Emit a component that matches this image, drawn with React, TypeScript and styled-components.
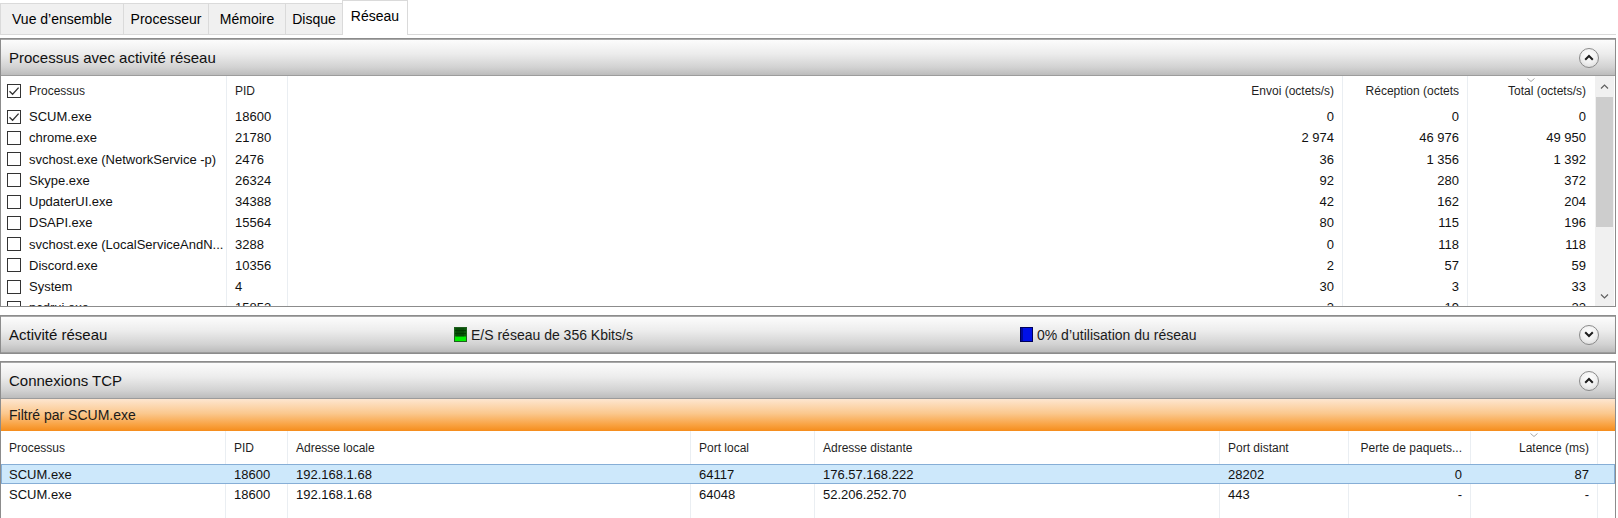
import styled, { createGlobalStyle, css } from "styled-components";

const GlobalStyle = createGlobalStyle`
  html, body {
    margin: 0;
    padding: 0;
    background: #fff;
    overflow: hidden;
  }
  body {
    font-family: "Liberation Sans", Arial, sans-serif;
    color: #1a1a1a;
  }
  * {
    box-sizing: border-box;
  }
`;

const Page = styled.div`
  width: 1616px;
  height: 518px;
  overflow: hidden;
  display: flex;
  flex-direction: column;
`;

const TabBar = styled.div`
  display: flex;
  align-items: flex-end;
  height: 35px;
  border-bottom: 1px solid #dadada;
  margin-bottom: 3px;
  flex-shrink: 0;
`;

const Tab = styled.div<{ $w: number; $active?: boolean }>`
  width: ${(p) => p.$w}px;
  height: 31px;
  display: flex;
  align-items: center;
  justify-content: center;
  font-size: 14px;
  color: #000;
  background: #f0f0f0;
  border: 1px solid #dadada;
  border-bottom: none;
  margin-right: -1px;
  ${(p) =>
    p.$active &&
    css`
      height: 35px;
      background: #fff;
      margin-bottom: -1px;
      padding-bottom: 5px;
      position: relative;
    `}
`;

const Panel = styled.section<{ $gap?: number; $grow?: boolean }>`
  border: 1px solid #8c8c8c;
  margin-top: ${(p) => p.$gap ?? 0}px;
  display: flex;
  flex-direction: column;
  flex-shrink: 0;
  ${(p) =>
    p.$grow &&
    css`
      height: 260px;
      border-bottom: none;
    `}
`;

const SectionHeader = styled.header`
  height: 37px;
  display: flex;
  align-items: center;
  padding: 0 16px 0 8px;
  background: linear-gradient(#fcfcfc 0%, #ececec 40%, #d2d2d2 78%, #bcbcbc 100%);
  border-top: 1px solid #a8a8a8;
  border-bottom: 1px solid #9c9c9c;
  flex-shrink: 0;
`;

const SectionTitle = styled.div<{ $w?: number }>`
  font-size: 15px;
  color: #111;
  width: ${(p) => (p.$w ? `${p.$w}px` : "auto")};
  white-space: nowrap;
`;

const Legend = styled.div<{ $w: number }>`
  width: ${(p) => p.$w}px;
  display: flex;
  align-items: center;
  gap: 4px;
  font-size: 14px;
  color: #1a1a1a;
  white-space: nowrap;
`;

const CollapseButton = styled.div`
  margin-left: auto;
  width: 20px;
  height: 20px;
  border-radius: 50%;
  border: 1px solid #8a8a8a;
  background: radial-gradient(circle at 50% 35%, #ffffff 0%, #f1f1f1 50%, #d4d4d4 100%);
  display: flex;
  align-items: center;
  justify-content: center;
`;

const ProcessArea = styled.div`
  display: flex;
  height: 230px;
  background: #fff;
`;

const TableWrap = styled.div`
  flex: 1;
  overflow: hidden;
  display: flex;
  flex-direction: column;
`;

const GridRow = styled.div<{ $cols: string; $h: number; $selected?: boolean }>`
  display: grid;
  grid-template-columns: ${(p) => p.$cols};
  height: ${(p) => p.$h}px;
  flex-shrink: 0;
  ${(p) =>
    p.$selected &&
    css`
      background: #cde8fb;
      outline: 1px solid #86aed6;
      outline-offset: -1px;
    `}
`;

const Cell = styled.div<{ $right?: boolean; $head?: boolean; $plain?: boolean }>`
  position: relative;
  padding: 0 8px;
  border-right: 1px solid ${(p) => (p.$plain ? "transparent" : "#eaeef2")};
  display: flex;
  align-items: center;
  gap: 8px;
  justify-content: ${(p) => (p.$right ? "flex-end" : "flex-start")};
  font-size: ${(p) => (p.$head ? 12 : 13)}px;
  color: ${(p) => (p.$head ? "#1f1f1f" : "#111")};
  white-space: nowrap;
  overflow: hidden;
`;

const NameCell = styled(Cell)`
  padding-left: 6px;
`;

const SortMark = styled.svg`
  position: absolute;
  top: 2px;
  left: 50%;
  margin-left: -4px;
`;

const Box = styled.span`
  width: 14px;
  height: 14px;
  border: 1px solid #333;
  background: #fff;
  flex-shrink: 0;
  display: flex;
  align-items: center;
  justify-content: center;
`;

const ScrollBar = styled.div`
  width: 19px;
  background: #f0f0f0;
  display: flex;
  flex-direction: column;
  margin-right: 1px;
`;

const ScrollArrow = styled.div<{ $h: number }>`
  height: ${(p) => p.$h}px;
  display: flex;
  align-items: center;
  justify-content: center;
`;

const Thumb = styled.div`
  height: 130px;
  background: #cdcdcd;
  margin: 0 1px;
`;

const Track = styled.div`
  flex: 1;
`;

const FilterBar = styled.div`
  height: 32px;
  display: flex;
  align-items: center;
  padding-left: 8px;
  font-size: 14px;
  color: #1a1a1a;
  background: linear-gradient(#fde6d0 0%, #fbc88e 45%, #f9a343 80%, #f58d1c 100%);
  flex-shrink: 0;
`;

const TcpBody = styled.div`
  flex: 1;
  display: flex;
  flex-direction: column;
  background: #fff;
`;

const procCols = "226px 61px 1055px 125px 1fr";
const tcpCols = "225px 62px 403px 124px 405px 129px 122px 127px 1fr";

const tabs = [
  { label: "Vue d\u2019ensemble", w: 124 },
  { label: "Processeur", w: 86 },
  { label: "Mémoire", w: 78 },
  { label: "Disque", w: 58 },
  { label: "Réseau", w: 66, active: true },
];

const nb = "\u00a0";

const processes = [
  { name: "SCUM.exe", pid: "18600", send: "0", recv: "0", total: "0", checked: true },
  { name: "chrome.exe", pid: "21780", send: `2${nb}974`, recv: `46${nb}976`, total: `49${nb}950` },
  { name: "svchost.exe (NetworkService -p)", pid: "2476", send: "36", recv: `1${nb}356`, total: `1${nb}392` },
  { name: "Skype.exe", pid: "26324", send: "92", recv: "280", total: "372" },
  { name: "UpdaterUI.exe", pid: "34388", send: "42", recv: "162", total: "204" },
  { name: "DSAPI.exe", pid: "15564", send: "80", recv: "115", total: "196" },
  { name: "svchost.exe (LocalServiceAndN...", pid: "3288", send: "0", recv: "118", total: "118" },
  { name: "Discord.exe", pid: "10356", send: "2", recv: "57", total: "59" },
  { name: "System", pid: "4", send: "30", recv: "3", total: "33" },
  { name: "pcdrui.exe", pid: "15852", send: "3", recv: "19", total: "22" },
];

const connections = [
  {
    name: "SCUM.exe",
    pid: "18600",
    local: "192.168.1.68",
    lport: "64117",
    remote: "176.57.168.222",
    rport: "28202",
    loss: "0",
    latency: "87",
    selected: true,
  },
  {
    name: "SCUM.exe",
    pid: "18600",
    local: "192.168.1.68",
    lport: "64048",
    remote: "52.206.252.70",
    rport: "443",
    loss: "-",
    latency: "-",
  },
];

function Chevron({ up }: { up?: boolean }) {
  return (
    <svg width="10" height="7" viewBox="0 0 10 7">
      <path
        d={up ? "M1.2 5.8 L5 2 L8.8 5.8" : "M1.2 1.2 L5 5 L8.8 1.2"}
        stroke="#1e1e1e"
        strokeWidth="2"
        fill="none"
      />
    </svg>
  );
}

function SmallArrow({ up }: { up?: boolean }) {
  return (
    <svg width="9" height="5" viewBox="0 0 9 5">
      <path
        d={up ? "M1 4.5 L4.5 1 L8 4.5" : "M1 0.5 L4.5 4 L8 0.5"}
        stroke="#606060"
        strokeWidth="1.2"
        fill="none"
      />
    </svg>
  );
}

function SortArrow() {
  return (
    <SortMark width="8" height="4" viewBox="0 0 8 4">
      <path d="M0.5 0.5 L4 3.5 L7.5 0.5" stroke="#a7a7a7" strokeWidth="1" fill="none" />
    </SortMark>
  );
}

function CheckBox({ checked }: { checked?: boolean }) {
  return (
    <Box>
      {checked && (
        <svg width="12" height="12" viewBox="0 0 12 12">
          <path d="M1.5 6.2 L4.6 9.3 L10.6 2.6" stroke="#333" strokeWidth="1.3" fill="none" />
        </svg>
      )}
    </Box>
  );
}

function IoIcon() {
  return (
    <svg width="13" height="15" viewBox="0 0 13 15">
      <rect x="0.5" y="0.5" width="12" height="14" fill="#00f000" stroke="#1f5f1f" />
      <rect x="1" y="1" width="11" height="8.5" fill="#0a5a0a" />
      {[3, 5, 7, 9].map((x) => (
        <line key={x} x1={x} y1="1" x2={x} y2="9.5" stroke="#003800" strokeWidth="0.8" />
      ))}
      {[3.5, 6.5].map((y) => (
        <line key={y} x1="1" y1={y} x2="12" y2={y} stroke="#003800" strokeWidth="0.8" />
      ))}
    </svg>
  );
}

function UsageIcon() {
  return (
    <svg width="13" height="15" viewBox="0 0 13 15">
      <rect x="0.5" y="0.5" width="12" height="14" fill="#0010e8" stroke="#00005a" />
      <rect x="1" y="1" width="2" height="13" fill="#000a9a" />
    </svg>
  );
}

export default function App() {
  return (
    <>
      <GlobalStyle />
      <Page>
        <TabBar>
          {tabs.map((t) => (
            <Tab key={t.label} $w={t.w} $active={t.active}>
              {t.label}
            </Tab>
          ))}
        </TabBar>

        <Panel>
          <SectionHeader>
            <SectionTitle>Processus avec activité réseau</SectionTitle>
            <CollapseButton>
              <Chevron up />
            </CollapseButton>
          </SectionHeader>
          <ProcessArea>
            <TableWrap>
              <GridRow $cols={procCols} $h={30}>
                <NameCell $head>
                  <CheckBox checked />
                  Processus
                </NameCell>
                <Cell $head>PID</Cell>
                <Cell $head $right>
                  Envoi (octets/s)
                </Cell>
                <Cell $head $right>
                  Réception (octets
                </Cell>
                <Cell $head $right $plain>
                  <SortArrow />
                  Total (octets/s)
                </Cell>
              </GridRow>
              {processes.map((p) => (
                <GridRow key={p.name + p.pid} $cols={procCols} $h={21.25}>
                  <NameCell>
                    <CheckBox checked={p.checked} />
                    {p.name}
                  </NameCell>
                  <Cell>{p.pid}</Cell>
                  <Cell $right>{p.send}</Cell>
                  <Cell $right>{p.recv}</Cell>
                  <Cell $right $plain>
                    {p.total}
                  </Cell>
                </GridRow>
              ))}
            </TableWrap>
            <ScrollBar>
              <ScrollArrow $h={21}>
                <SmallArrow up />
              </ScrollArrow>
              <Thumb />
              <Track />
              <ScrollArrow $h={20}>
                <SmallArrow />
              </ScrollArrow>
            </ScrollBar>
          </ProcessArea>
        </Panel>

        <Panel $gap={8}>
          <SectionHeader>
            <SectionTitle $w={445}>Activité réseau</SectionTitle>
            <Legend $w={566}>
              <IoIcon />
              E/S réseau de 356 Kbits/s
            </Legend>
            <Legend $w={300}>
              <UsageIcon />
              0% d’utilisation du réseau
            </Legend>
            <CollapseButton>
              <Chevron />
            </CollapseButton>
          </SectionHeader>
        </Panel>

        <Panel $gap={7} $grow>
          <SectionHeader>
            <SectionTitle>Connexions TCP</SectionTitle>
            <CollapseButton>
              <Chevron up />
            </CollapseButton>
          </SectionHeader>
          <FilterBar>Filtré par SCUM.exe</FilterBar>
          <TcpBody>
            <GridRow $cols={tcpCols} $h={33}>
              <Cell $head>Processus</Cell>
              <Cell $head>PID</Cell>
              <Cell $head>Adresse locale</Cell>
              <Cell $head>Port local</Cell>
              <Cell $head>Adresse distante</Cell>
              <Cell $head>Port distant</Cell>
              <Cell $head $right>
                Perte de paquets...
              </Cell>
              <Cell $head $right>
                <SortArrow />
                Latence (ms)
              </Cell>
              <Cell $head $plain />
            </GridRow>
            {connections.map((c) => (
              <GridRow key={c.lport} $cols={tcpCols} $h={20} $selected={c.selected}>
                <Cell $plain={c.selected}>{c.name}</Cell>
                <Cell $plain={c.selected}>{c.pid}</Cell>
                <Cell $plain={c.selected}>{c.local}</Cell>
                <Cell $plain={c.selected}>{c.lport}</Cell>
                <Cell $plain={c.selected}>{c.remote}</Cell>
                <Cell $plain={c.selected}>{c.rport}</Cell>
                <Cell $right $plain={c.selected}>
                  {c.loss}
                </Cell>
                <Cell $right $plain={c.selected}>
                  {c.latency}
                </Cell>
                <Cell $plain />
              </GridRow>
            ))}
            <GridRow $cols={tcpCols} $h={120}>
              {Array.from({ length: 8 }).map((_, i) => (
                <Cell key={i} />
              ))}
              <Cell $plain />
            </GridRow>
          </TcpBody>
        </Panel>
      </Page>
    </>
  );
}
